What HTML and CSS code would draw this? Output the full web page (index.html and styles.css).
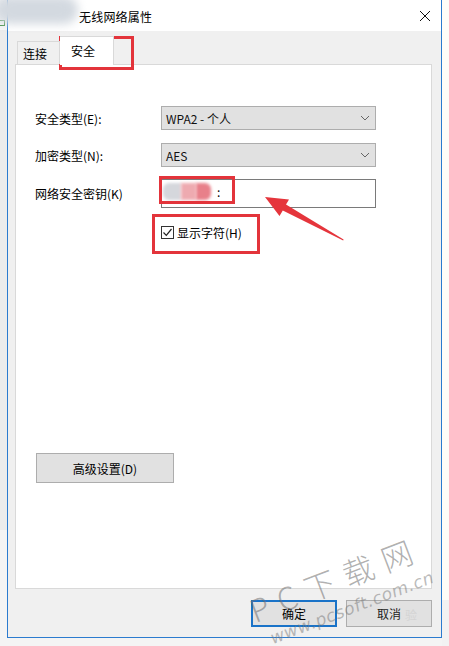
FILE: index.html
```
<!DOCTYPE html>
<html lang="zh-CN">
<head>
<meta charset="utf-8">
<title>无线网络属性</title>
<link rel="stylesheet" href="styles.css">
</head>
<body>
<div class="screen">
  <div class="left-strip"><span class="green-icon"></span></div>
  <div class="window">
    <div class="titlebar">
      <span class="title">无线网络属性</span>
      <svg class="close" width="12" height="12" viewBox="0 0 12 12"><path d="M1 1 L11 11 M11 1 L1 11" stroke="#111" stroke-width="1" fill="none"/></svg>
    </div>
    <div class="body">
      <div class="tabs">
        <div class="tab">连接</div>
        <div class="tab active">安全</div>
      </div>
      <div class="panel">
        <div class="row r1">
          <span class="label">安全类型(E):</span>
          <div class="select"><span>WPA2 - 个人</span><svg class="chev" width="10" height="6" viewBox="0 0 10 6"><path d="M1 1 L5 5 L9 1" stroke="#666" stroke-width="1" fill="none"/></svg></div>
        </div>
        <div class="row r2">
          <span class="label">加密类型(N):</span>
          <div class="select"><span>AES</span><svg class="chev" width="10" height="6" viewBox="0 0 10 6"><path d="M1 1 L5 5 L9 1" stroke="#666" stroke-width="1" fill="none"/></svg></div>
        </div>
        <div class="row r3">
          <span class="label">网络安全密钥(K)</span>
          <div class="input"><span class="blob b1"></span><span class="blob b2"></span><span class="blob b3"></span><span class="colon">:</span></div>
        </div>
        <div class="check-row">
          <span class="checkbox"><svg width="11" height="11" viewBox="0 0 11 11"><path d="M1.5 5.5 L4.3 8.3 L9.5 2" stroke="#222" stroke-width="1.2" fill="none"/></svg></span>
          <span class="check-label">显示字符(H)</span>
        </div>
        <div class="adv-wrap"><button class="btn adv">高级设置(D)</button></div>
      </div>
      <div class="footer">
        <button class="btn ok">确定</button>
        <button class="btn cancel">取消<span class="ghost">验</span></button>
      </div>
    </div>
  </div>
  <div class="right-strip"></div>

  <div class="blur-icon"></div>
  <div class="mark m-tab"></div>
  <div class="mark m-key"></div>
  <div class="mark m-check"></div>
  <svg class="arrow" width="449" height="646" viewBox="0 0 449 646">
    <polygon points="265,197 279.5,216 282.8,210.6 343.2,240.6 343.6,239.4 286,204.6 289,199.5" fill="#e5353c"/>
  </svg>
  <div class="wm wm-big"><span>P</span><span>C</span><span>下</span><span>载</span><span>网</span></div>
  <div class="wm wm-url">www.pcsoft.com.cn</div>
</div>
</body>
</html>
```
FILE: styles.css
```
* { box-sizing: border-box; }
html, body { margin: 0; padding: 0; }
body {
  width: 449px;
  height: 646px;
  overflow: hidden;
  background: #f4f4f4;
  font-family: "Noto Sans CJK SC", "Noto Sans", sans-serif;
  font-size: 12px;
  color: #000;
}
.screen {
  position: relative;
  display: flex;
  width: 449px;
  height: 646px;
}
.left-strip {
  width: 7px;
  height: 646px;
  background: linear-gradient(#f7f7f7 0, #f7f7f7 30px, #ececec 30px, #ececec 530px, #f4f4f4 530px);
  position: relative;
}
.green-icon {
  display: block;
  margin-top: 20px;
  width: 5px;
  height: 6px;
  border: 1px solid #3a8a3a;
  border-left: none;
}
.right-strip {
  flex: 1;
  height: 646px;
  background: linear-gradient(#fffdf8 0, #fffdf8 600px, #f2f2f2 600px);
}
.window {
  width: 435px;
  height: 638px;
  border: 1px solid #2b7bcf;
  border-top: none;
  display: flex;
  flex-direction: column;
  background: #f0f0f0;
}
.titlebar {
  height: 31px;
  background: #fff;
  display: flex;
  align-items: center;
  padding-left: 71px;
  padding-right: 10px;
}
.title {
  flex: 1;
  font-size: 12px;
  letter-spacing: 0.2px;
  margin-top: 1px;
}
.close { display: block; }
.body {
  flex: 1;
  display: flex;
  flex-direction: column;
  padding-left: 7px;
  padding-right: 9px;
}
.tabs {
  height: 33px;
  display: flex;
  align-items: flex-end;
  padding-left: 2px;
  position: relative;
  z-index: 2;
}
.tab {
  width: 43px;
  height: 23px;
  border: 1px solid #d9d9d9;
  border-bottom: none;
  background: #f0f0f0;
  display: flex;
  align-items: center;
  justify-content: flex-start;
  padding-left: 5px;
  padding-top: 1px;
  font-size: 12px;
}
.tab.active {
  width: 54px;
  height: 29px;
  margin-bottom: -1px;
  background: #fff;
  border-left: none;
  padding-left: 11px;
  padding-top: 0;
  padding-bottom: 2px;
}
.panel {
  width: 417px;
  height: 525px;
  background: #fff;
  border: 1px solid #d9d9d9;
  padding-left: 19px;
  padding-top: 41px;
}
.row {
  display: flex;
  align-items: center;
}
.r2 { margin-top: 13px; }
.r3 { margin-top: 12px; }
.label {
  width: 126px;
  font-size: 12px;
}
.select {
  width: 215px;
  height: 24px;
  background: #e1e1e1;
  border: 1px solid #adadad;
  display: flex;
  align-items: center;
  justify-content: space-between;
  padding-left: 4px;
  padding-right: 5px;
  font-size: 12px;
  color: #111;
}
.chev { display: block; }
.input {
  width: 215px;
  height: 29px;
  background: #fff;
  border: 1px solid #7a7a7a;
  display: flex;
  align-items: center;
  padding-left: 1px;
  padding-bottom: 4px;
}
.blob {
  display: inline-block;
  height: 17px;
  filter: blur(1.5px);
}
.b1 { width: 18px; background: #d5d7dc; border-radius: 6px 0 0 6px; }
.b2 { width: 15px; background: #eeaab0; }
.b3 { width: 15px; background: #e8808a; border-radius: 0 6px 6px 0; }
.colon { margin-left: 6px; font-size: 12px; }
.check-row {
  display: flex;
  align-items: center;
  margin-top: 16px;
  margin-left: 126px;
}
.checkbox {
  width: 13px;
  height: 13px;
  border: 1px solid #333;
  background: #fff;
  display: flex;
  align-items: center;
  justify-content: center;
}
.checkbox svg { display: block; }
.check-label {
  margin-left: 3px;
  font-size: 12px;
}
.adv-wrap {
  margin-top: 212px;
  margin-left: 1px;
}
.btn {
  font-family: "Noto Sans CJK SC", "Noto Sans", sans-serif;
  font-size: 12px;
  color: #000;
  background: #e1e1e1;
  border: 1px solid #adadad;
  padding: 0;
  display: flex;
  align-items: center;
  justify-content: center;
}
.adv {
  width: 138px;
  height: 30px;
}
.footer {
  display: flex;
  justify-content: flex-end;
  gap: 9px;
  margin-top: 11px;
  padding-right: 0;
}
.ok, .cancel {
  width: 86px;
  height: 27px;
}
.ok { border: 2px solid #1a73c8; }
.cancel { position: relative; color: #222; }
.ghost {
  position: absolute;
  right: 14px;
  top: 5px;
  color: #d4d4d4;
}
.blur-icon {
  position: absolute;
  left: -6px;
  top: -4px;
  width: 84px;
  height: 28px;
  border-radius: 14px;
  background: #d3d9e0;
  filter: blur(5px);
}
.mark {
  position: absolute;
  border: 3px solid #e3343b;
}
.m-tab { left: 59px; top: 36px; width: 75px; height: 34px; }
.m-key { left: 159px; top: 176px; width: 76px; height: 28px; }
.m-check { left: 152px; top: 214px; width: 108px; height: 40px; }
.arrow {
  position: absolute;
  left: 0;
  top: 0;
}
.wm {
  position: absolute;
  color: rgba(110, 110, 110, 0.55);
  white-space: nowrap;
  transform-origin: left bottom;
}
.wm-big {
  left: 256px;
  top: 594px;
  font-size: 31px;
  font-weight: 300;
  transform: rotate(-21deg);
  display: flex;
  gap: 10px;
  line-height: 1;
}
.wm-url {
  left: 274px;
  top: 630px;
  font-size: 17px;
  font-family: "DejaVu Sans", sans-serif;
  font-style: italic;
  letter-spacing: 0.5px;
  transform: rotate(-21deg);
  color: rgba(120, 120, 120, 0.5);
  line-height: 1;
}
```
